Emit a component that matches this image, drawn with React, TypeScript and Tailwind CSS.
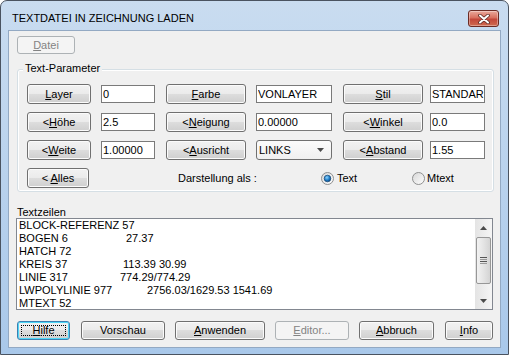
import React from 'react';

const font = "font-['Liberation_Sans',Arial,sans-serif]";

interface BtnProps {
  w: string;
  h?: string;
  disabled?: boolean;
  focused?: boolean;
  children: React.ReactNode;
}

const Btn: React.FC<BtnProps> = ({ w, h = 'h-[20px]', disabled, focused, children }) => {
  const base = `relative flex shrink-0 items-center justify-center rounded-[3px] border text-[11px] leading-[13px] ${w} ${h}`;
  if (disabled) {
    return <div className={`${base} border-[#adb2b5] bg-[#f4f4f4] text-[#838383]`}>{children}</div>;
  }
  return (
    <div
      className={`${base} bg-[linear-gradient(#f2f2f2_0%,#ebebeb_49%,#dddddd_50%,#cfcfcf_100%)] text-black ${
        focused
          ? 'border-[#3c7fb1] shadow-[inset_0_0_0_1px_#4fd7f7]'
          : 'border-[#707070] shadow-[inset_0_0_0_1px_#fbfbfb]'
      }`}
    >
      {focused && <span className="absolute inset-[3px] border border-dotted border-black"></span>}
      <span className="relative">{children}</span>
    </div>
  );
};

const Field: React.FC<{ w: string; value: string }> = ({ w, value }) => (
  <input
    readOnly
    defaultValue={value}
    className={`h-[18px] shrink-0 border border-[#7a7a7a] bg-white pl-[1px] text-[11px] leading-[13px] text-black outline-none ${w}`}
  />
);

const Radio: React.FC<{ checked?: boolean }> = ({ checked }) => (
  <svg width="13" height="13" viewBox="0 0 13 13" className="shrink-0">
    <defs>
      <linearGradient id={checked ? 'rg1' : 'rg0'} x1="0" y1="0" x2="1" y2="1">
        <stop offset="0" stopColor="#d6d6d6" />
        <stop offset="1" stopColor="#ffffff" />
      </linearGradient>
      <radialGradient id="dot" cx="0.4" cy="0.35" r="0.7">
        <stop offset="0" stopColor="#8ad4ff" />
        <stop offset="0.6" stopColor="#1c79c4" />
        <stop offset="1" stopColor="#0a3f73" />
      </radialGradient>
    </defs>
    <circle cx="6.5" cy="6.5" r="6" fill={`url(#${checked ? 'rg1' : 'rg0'})`} stroke="#8e8f8f" />
    {checked && <circle cx="6.5" cy="6.5" r="3.3" fill="url(#dot)" stroke="#1d4f7d" strokeWidth="0.8" />}
  </svg>
);

const lines = [
  { a: 'BLOCK-REFERENZ 57', b: '', w: '' },
  { a: 'BOGEN 6', b: '27.37', w: 'w-[107px]' },
  { a: 'HATCH 72', b: '', w: '' },
  { a: 'KREIS 37', b: '113.39 30.99', w: 'w-[104px]' },
  { a: 'LINIE 317', b: '774.29/774.29', w: 'w-[101px]' },
  { a: 'LWPOLYLINIE 977', b: '2756.03/1629.53 1541.69', w: 'w-[128px]' },
  { a: 'MTEXT 52', b: '', w: '' },
];

const Arrow: React.FC<{ up?: boolean }> = ({ up }) => (
  <svg width="7" height="4" viewBox="0 0 7 4">
    <polygon points={up ? '3.5,0 7,4 0,4' : '0,0 7,0 3.5,4'} fill="#4a4a4a" />
  </svg>
);

export default function App() {
  return (
    <div className={`h-[355px] w-[509px] bg-white ${font}`}>
      <div className="flex h-[355px] w-[509px] flex-col rounded-t-[7px] border border-[#4a5360] bg-linear-to-b from-[#c9dcf0] to-[#a9c8ea]">
        {/* Title bar */}
        <div className="flex h-[29px] shrink-0 items-start justify-between pl-[11px] pr-[9px] pt-[9px]">
          <span className="mt-[2px] text-[11px] leading-[13px] text-black">TEXTDATEI IN ZEICHNUNG LADEN</span>
          <div className="flex h-[17px] w-[31px] items-center justify-center rounded-[3px] border border-[#6b2b24] bg-[linear-gradient(#e9a99c_0%,#d8705f_45%,#c2473a_55%,#cf6a4f_100%)] shadow-[inset_0_0_0_1px_rgba(255,255,255,0.35)]">
            <svg width="12" height="10" viewBox="0 0 12 10">
              <path d="M2 1.5 L10 8.5 M10 1.5 L2 8.5" stroke="#5a2a24" strokeWidth="3.6" strokeLinecap="round" />
              <path d="M2 1.5 L10 8.5 M10 1.5 L2 8.5" stroke="#ffffff" strokeWidth="2" strokeLinecap="round" />
            </svg>
          </div>
        </div>

        {/* Client area */}
        <div className="mx-[7px] flex h-[318px] shrink-0 flex-col border border-[#93a9c3] bg-[#f0f0f0] text-[11px] leading-[13px] text-black">
          <div className="ml-[8px] mt-[5px]">
            <Btn w="w-[58px]" h="h-[18px]" disabled>
              <u>D</u>atei
            </Btn>
          </div>

          {/* Text-Parameter group */}
          <div className="relative ml-[8px] mt-[15px] w-[477px] rounded-[3px] border border-[#d5dfe5] pb-[3px] pl-[9px] pt-[14px] shadow-[inset_0_0_0_1px_#ffffff]">
            <span className="absolute left-[5px] top-[-8px] bg-[#f0f0f0] px-[2px]">Text-Parameter</span>
            <div className="flex flex-col gap-[8px]">
              <div className="flex h-[20px] items-center">
                <Btn w="w-[64px]"><u>L</u>ayer</Btn>
                <div className="ml-[10px]"><Field w="w-[54px]" value="0" /></div>
                <div className="ml-[11px]"><Btn w="w-[80px]"><u>F</u>arbe</Btn></div>
                <div className="ml-[10px]"><Field w="w-[76px]" value="VONLAYER" /></div>
                <div className="ml-[11px]"><Btn w="w-[80px]"><u>S</u>til</Btn></div>
                <div className="ml-[7px]"><Field w="w-[55px]" value="STANDARD" /></div>
              </div>
              <div className="flex h-[20px] items-center">
                <Btn w="w-[64px]">&lt;<u>H</u>öhe</Btn>
                <div className="ml-[10px]"><Field w="w-[54px]" value="2.5" /></div>
                <div className="ml-[11px]"><Btn w="w-[80px]">&lt;<u>N</u>eigung</Btn></div>
                <div className="ml-[10px]"><Field w="w-[76px]" value="0.00000" /></div>
                <div className="ml-[11px]"><Btn w="w-[80px]">&lt;<u>W</u>inkel</Btn></div>
                <div className="ml-[7px]"><Field w="w-[55px]" value="0.0" /></div>
              </div>
              <div className="flex h-[20px] items-center">
                <Btn w="w-[64px]">&lt;<u>W</u>eite</Btn>
                <div className="ml-[10px]"><Field w="w-[54px]" value="1.00000" /></div>
                <div className="ml-[11px]"><Btn w="w-[80px]">&lt;<u>A</u>usricht</Btn></div>
                <div className="ml-[10px] flex h-[20px] w-[76px] items-center justify-between rounded-[3px] border border-[#707070] bg-[linear-gradient(#fbfbfb,#f0f0f0)] pl-[2px] pr-[7px]">
                  <span>LINKS</span>
                  <Arrow />
                </div>
                <div className="ml-[11px]"><Btn w="w-[80px]">&lt;<u>A</u>bstand</Btn></div>
                <div className="ml-[7px]"><Field w="w-[55px]" value="1.55" /></div>
              </div>
              <div className="flex h-[20px] items-center">
                <Btn w="w-[62px]">&lt; <u>A</u>lles</Btn>
                <span className="ml-[89px] w-[143px]">Darstellung als :</span>
                <div className="flex w-[91px] items-center gap-[3px]">
                  <Radio checked />
                  <span>Text</span>
                </div>
                <div className="flex items-center gap-[2px]">
                  <Radio />
                  <span>Mtext</span>
                </div>
              </div>
            </div>
          </div>

          <div className="ml-[8px] mt-[14px] h-[12px] leading-[12px]">Textzeilen</div>

          {/* List box */}
          <div className="ml-[7px] flex h-[92px] w-[477px] border border-[#828790] bg-white">
            <div className="flex-1 overflow-hidden pl-[2px]">
              {lines.map((l) => (
                <div key={l.a} className="flex h-[13px] whitespace-nowrap leading-[13px]">
                  <span className={`shrink-0 ${l.w}`}>{l.a}</span>
                  {l.b && <span>{l.b}</span>}
                </div>
              ))}
            </div>
            <div className="flex w-[17px] shrink-0 flex-col items-center bg-[linear-gradient(90deg,#e4e4e4,#f5f5f5)]">
              <div className="flex h-[17px] w-full items-center justify-center">
                <Arrow up />
              </div>
              <div className="mt-[1px] flex h-[47px] w-[15px] flex-col items-center justify-center gap-[1px] rounded-[2px] border border-[#979797] bg-[linear-gradient(90deg,#f2f2f2,#e4e4e4_50%,#d4d4d4)]">
                <div className="h-px w-[7px] bg-[#555]"></div>
                <div className="h-px w-[7px] bg-[#999]"></div>
                <div className="h-px w-[7px] bg-[#555]"></div>
                <div className="h-px w-[7px] bg-[#999]"></div>
              </div>
              <div className="flex-1"></div>
              <div className="flex h-[17px] w-full items-center justify-center">
                <Arrow />
              </div>
            </div>
          </div>

          {/* Bottom buttons */}
          <div className="ml-[8px] mt-[11px] flex items-center">
            <Btn w="w-[53px]" h="h-[19px]" focused><u>H</u>ilfe</Btn>
            <div className="ml-[11px]"><Btn w="w-[84px]" h="h-[19px]">Vorschau</Btn></div>
            <div className="ml-[10px]"><Btn w="w-[90px]" h="h-[19px]"><u>A</u>nwenden</Btn></div>
            <div className="ml-[10px]"><Btn w="w-[74px]" h="h-[19px]" disabled><u>E</u>ditor...</Btn></div>
            <div className="ml-[10px]"><Btn w="w-[75px]" h="h-[19px]"><u>A</u>bbruch</Btn></div>
            <div className="ml-[11px]"><Btn w="w-[48px]" h="h-[19px]"><u>I</u>nfo</Btn></div>
          </div>
        </div>
      </div>
    </div>
  );
}
